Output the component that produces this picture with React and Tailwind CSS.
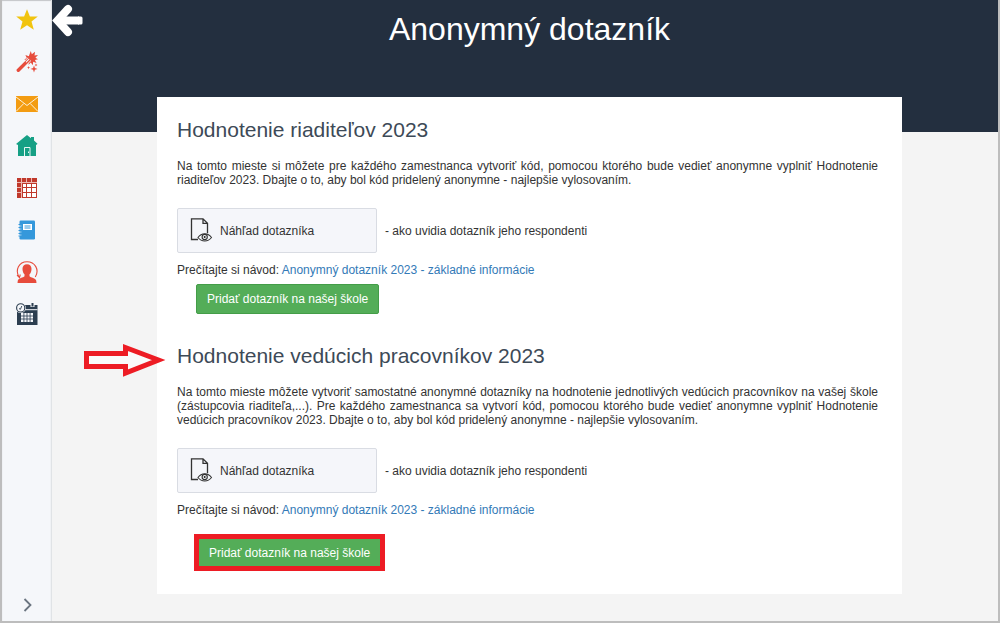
const TEXT = "text-xs leading-[14px] text-[#333]";

const StarIcon = () => (
  <svg viewBox="0 0 22 22" className="size-[22px]">
    <path d="M11 .2l2.900 7.300h7.900l-6.300 5 2.300 8.200L11 16.200l-6.800 4.500 2.300-8.200-6.300-5h7.900z" fill="#f1c40f" />
  </svg>
);

const WandIcon = () => (
  <svg viewBox="0 0 22 22" className="size-[22px]" fill="#e74c3c">
    <path d="M14.800 0l1 3.300L19 .8l-.5 3.700 3.500-.6-2.600 2.800 2.600 1.500-3.100.7 1.600 3.200-3.300-1.300-.4 3.500-2-2.900-2.200 2.300-.2-3-1.600-1.500-2.600-1 2.700-1-1.500-3.200 3.400 1.300z" />
    <path d="M2.600 19.500L13.500 8.200" stroke="#f5f7fa" strokeWidth="4.600" />
    <path d="M2.300 19.300L13 8.600" stroke="#e74c3c" strokeWidth="3.400" strokeLinecap="round" />
    <path d="M10.300 10.900l2.500-2.500" stroke="#f5f7fa" strokeWidth="1.100" strokeLinecap="round" />
    <path d="M18 14.400l.9 2.600 2.700.9-2.700.9-.9 2.700-.9-2.700-2.700-.9 2.700-.9zM12.500 15l.5 1.200 1.200.4-1.200.5-.5 1.200-.4-1.200-1.200-.5 1.200-.4zM20 12.600l.4 1 1.100.4-1.100.4-.4 1-.4-1-1-.4 1-.4z" />
  </svg>
);

const MailIcon = () => (
  <svg viewBox="0 0 22 22" className="size-[22px]">
    <path d="M0 3h22v16H0z" fill="#f39c12" />
    <path d="M0 4l11 8.500L22 4M0 18.500l7.800-8M22 18.500l-7.800-8" fill="none" stroke="#fdf0d8" strokeWidth="1" />
  </svg>
);

const HomeIcon = () => (
  <svg viewBox="0 0 22 22" className="size-[22px]">
    <path d="M11 0l4 3.300V2h3v3.500l3.500 3.300-.8 1H20V21H2V9.800H.9L.3 8.700z" fill="#16a085" />
    <path d="M8.500 21v-8.500h5.500V21M12.500 16.500v1.500" fill="none" stroke="#e8f6f3" strokeWidth="1" />
  </svg>
);

const TableIcon = () => (
  <svg viewBox="0 0 22 22" className="size-[22px]" fill="#c0392b">
    <path d="M1 1h20v20H1z" />
    <path
      d="M7 7h3v3H7zM11 7h4v3h-4zM16 7h4v3h-4zM7 11h3v4H7zM11 11h4v4h-4zM16 11h4v4h-4zM7 16h3v4H7zM11 16h4v4h-4zM16 16h4v4h-4z"
      fill="#fff"
    />
    <path d="M5.500 1v20M10.500 1v5M15.500 1v5M1 5.500h20M1 10.500h5M1 15.500h5" stroke="#efb8b2" strokeWidth="1" />
  </svg>
);

const NotebookIcon = () => (
  <svg viewBox="0 0 22 22" className="size-[22px]">
    <rect x="3.500" y="1.500" width="15.500" height="19" rx="1.200" fill="#3498db" />
    <path d="M2.500 5.500h3M2.500 8.500h3M2.500 11.500h3M2.500 14.500h3M2.500 17h3" stroke="#3498db" strokeWidth="1" />
    <path d="M3 7h2.500M3 10h2.500M3 13h2.500M3 16h2.500" stroke="#d6eaf8" strokeWidth=".7" />
    <path d="M7 5h9v6H7z" fill="#fff" />
    <path d="M8.500 7h6M8.500 9h6" stroke="#3498db" strokeWidth="1" />
  </svg>
);

const PersonIcon = () => (
  <svg viewBox="0 0 22 22" className="size-[22px]">
    <path
      d="M11 3.200c3 0 4.600 2 4.500 4.800 0 2.600-.9 4.300-2 5.300v1.900c1.200 1.300 6.100 1.900 6.700 4.200l.3 2.600h-19l.3-2.600c.6-2.300 5.500-2.900 6.700-4.200v-1.900c-1.100-1-2-2.700-2-5.300-.1-2.800 1.500-4.800 4.500-4.800z"
      fill="#e74c3c"
    />
    <path d="M3.200 16.500C-1.300 9 3 .7 11 .7s12.700 8 8.300 15.300M1 14.200l2.500 2.500.8-3.200" fill="none" stroke="#e74c3c" strokeWidth="1.100" />
  </svg>
);

const CalendarIcon = () => (
  <svg viewBox="0 0 22 22" className="size-[22px]">
    <path d="M1 2h20.500v20H1z" fill="#2c3e50" />
    <path d="M1 6.700h20.500" stroke="#f5f7fa" strokeWidth="1" />
    <path d="M14.500 0h4v4h-4z" fill="#f5f7fa" />
    <path d="M15.500 0h2v3.500h-2z" fill="#2c3e50" />
    <path d="M0 0h4v8H0z" fill="#f5f7fa" />
    <circle cx="4.700" cy="4.900" r="5.200" fill="#f5f7fa" />
    <circle cx="4.700" cy="4.900" r="4.100" fill="#f5f7fa" stroke="#2c3e50" strokeWidth="1.100" />
    <path d="M4.300 6.500L5.800 3M4.300 6.500L3 5.300" stroke="#2c3e50" strokeWidth=".9" />
    <path d="M5 10h12v9H5z" fill="#f5f7fa" />
    <path d="M7.900 10v9M11 10v9M14.100 10v9M5 13h12M5 16h12" stroke="#2c3e50" strokeWidth=".8" />
  </svg>
);

const PreviewIcon = () => (
  <svg viewBox="0 0 24 26" className="h-[26px] w-6 shrink-0" fill="none" stroke="#333" strokeWidth="1.300">
    <path d="M9 21.500H2.500V.800H14L18.500 5.300v10M14 .800v4.500h4.500" />
    <path d="M9 19.500c3.500-5 10-5 13.500 0-3.500 4.600-10 4.600-13.500 0z" fill="#f5f7fa" strokeWidth="1.100" />
    <circle cx="15.700" cy="19" r="2.600" strokeWidth="1.100" />
    <circle cx="15.700" cy="19" r="1" fill="#222" stroke="none" />
  </svg>
);

const menu = [
  { label: "Obľúbené", Icon: StarIcon },
  { label: "Sprievodca", Icon: WandIcon },
  { label: "Správy", Icon: MailIcon },
  { label: "Domov", Icon: HomeIcon },
  { label: "Rozvrh", Icon: TableIcon },
  { label: "Triedna kniha", Icon: NotebookIcon },
  { label: "Profil", Icon: PersonIcon },
  { label: "Kalendár", Icon: CalendarIcon },
];

const Sidebar = () => (
  <aside className="flex w-[50px] shrink-0 flex-col items-center justify-between border-r border-[#e0e3e6] bg-[#f5f7fa] pt-[9px] pb-2 inset-shadow-[0_1px_1px_#00000033]">
    <nav className="flex flex-col gap-5">
      {menu.map(({ label, Icon }) => (
        <button key={label} aria-label={label} className="cursor-pointer">
          <Icon />
        </button>
      ))}
    </nav>
    <button aria-label="Rozbaliť menu" className="cursor-pointer">
      <svg viewBox="0 0 16 16" className="size-4" fill="none" stroke="#6b7580" strokeWidth="1.800">
        <path d="M5.500 2l6 6-6 6" />
      </svg>
    </button>
  </aside>
);

const Preview = () => (
  <div className="mt-[21px] flex items-center gap-2">
    <button className={`${TEXT} flex h-[45px] w-[200px] cursor-pointer items-center gap-[7px] rounded-xs border border-[#d9dce3] bg-[#f5f6fa] pl-[11px]`}>
      <PreviewIcon />
      Náhľad dotazníka
    </button>
    <p className={TEXT}>- ako uvidia dotazník jeho respondenti</p>
  </div>
);

const Guide = () => (
  <p className={`${TEXT} mt-2.5`}>
    Prečítajte si návod:{" "}
    <a href="#navod" className="text-[#337ab7]">
      Anonymný dotazník 2023 - základné informácie
    </a>
  </p>
);

const AddButton = ({ highlighted }) => (
  <button
    className={`cursor-pointer bg-[#54ad58] px-2.5 text-xs font-medium text-white ${
      highlighted ? "h-[37px] border-5 border-[#ed1c24]" : "h-[30px] rounded-xs border border-[#449d48]"
    }`}
  >
    Pridať dotazník na našej škole
  </button>
);

export default function App() {
  return (
    <div className="flex min-h-screen border-2 border-t-0 border-[#bdbdbd] bg-[#f4f4f4] font-['Liberation_Sans',Arial,sans-serif]">
      <Sidebar />
      <main className="min-w-0 flex-1">
        <header className="relative h-[132px] bg-[#232f3f] pt-[9px] pr-24 pl-[105px]">
          <button aria-label="Späť" className="absolute top-1 left-0 cursor-pointer">
            <svg viewBox="0 0 32 34" className="h-[34px] w-8" fill="none" stroke="#fff" strokeWidth="8">
              <path d="M16 5L5.500 16.500 16 28" strokeLinecap="round" />
              <path d="M6 16.500h21" />
              <path d="M26 12.500h3a1.500 1.500 0 0 1 1.500 1.500v5a1.500 1.500 0 0 1-1.500 1.500h-3z" fill="#fff" stroke="none" />
            </svg>
          </button>
          <h1 className="text-center text-[32px] leading-10 text-white">Anonymný dotazník</h1>
        </header>

        <div className="relative -mt-[35px] mr-24 ml-[105px] bg-white px-5 pt-[21px] pb-[23px]">
          <section className="pr-1">
            <h2 className="text-[21px] leading-6 text-[#3d4a57]">Hodnotenie riaditeľov 2023</h2>
            <p className={`${TEXT} mt-[17px] text-justify`}>
              Na tomto mieste si môžete pre každého zamestnanca vytvoriť kód, pomocou ktorého bude vedieť anonymne
              vyplniť Hodnotenie riaditeľov 2023. Dbajte o to, aby bol kód pridelený anonymne - najlepšie vylosovaním.
            </p>
            <Preview />
            <Guide />
            <div className="mt-[7px] pl-[19px]">
              <AddButton />
            </div>
          </section>

          <section className="relative mt-[30px] pr-1">
            {/* callout arrow pointing at the heading */}
            <svg viewBox="0 0 84 34" className="absolute -top-px -left-[94px] h-[34px] w-[84px]">
              <path d="M3.500 10.500h39V4.500L75.500 17 42.500 30v-6.500h-39z" fill="#fff" fillOpacity=".5" stroke="#ed1c24" strokeWidth="5" />
            </svg>
            <h2 className="text-[21px] leading-6 text-[#3d4a57]">Hodnotenie vedúcich pracovníkov 2023</h2>
            <p className={`${TEXT} mt-[17px] text-justify`}>
              Na tomto mieste môžete vytvoriť samostatné anonymné dotazníky na hodnotenie jednotlivých vedúcich
              pracovníkov na vašej škole (zástupcovia riaditeľa,...). Pre každého zamestnanca sa vytvorí kód, pomocou
              ktorého bude vedieť anonymne vyplniť Hodnotenie vedúcich pracovníkov 2023. Dbajte o to, aby bol kód
              pridelený anonymne - najlepšie vylosovaním.
            </p>
            <Preview />
            <Guide />
            <div className="mt-[17px] pl-[17px]">
              <AddButton highlighted />
            </div>
          </section>
        </div>
      </main>
    </div>
  );
}
